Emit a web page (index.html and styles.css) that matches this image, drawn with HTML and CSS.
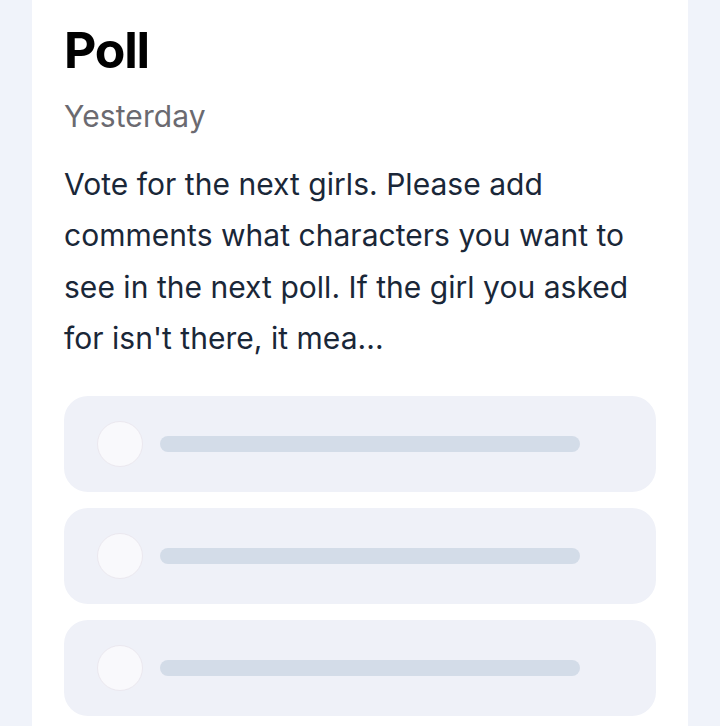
FILE: index.html
```html
<!DOCTYPE html>
<html lang="en">
<head>
    <meta charset="UTF-8">
    <meta name="viewport" content="width=device-width, initial-scale=1.0">
    <title>Poll</title>
    <link rel="stylesheet" href="styles.css">
</head>
<body>
    <div class="card">
        <h1 class="poll-title">Poll</h1>
        <div class="poll-date">Yesterday</div>
        <p class="poll-text">Vote for the next girls. Please add comments what characters you want to see in the next poll. If the girl you asked for isn't there, it mea...</p>

        <div class="options">
            <div class="option">
                <span class="radio"></span>
                <span class="bar"></span>
            </div>
            <div class="option">
                <span class="radio"></span>
                <span class="bar"></span>
            </div>
            <div class="option">
                <span class="radio"></span>
                <span class="bar"></span>
            </div>
        </div>
    </div>
</body>
</html>
```

FILE: styles.css
```css
body {
    margin: 0;
    background-color: #f0f3fa;
    font-family: Inter, 'Noto Sans', sans-serif;
    color: #1a2738;
}

.card {
    background-color: #ffffff;
    margin: 0 32px;
    padding: 20px 32px 40px 32px;
    min-height: 726px;
    box-sizing: border-box;
}

.poll-title {
    margin: 0;
    font-size: 50px;
    font-weight: 700;
    line-height: 60px;
    letter-spacing: -1.2px;
    color: #000000;
}

.poll-date {
    margin-top: 16px;
    font-size: 30px;
    line-height: 40px;
    letter-spacing: 0.1px;
    color: #6b6a70;
}

.poll-text {
    margin: 23px 0 0 0;
    font-size: 30px;
    line-height: 51.3px;
    letter-spacing: 0.03px;
    color: #1a2738;
}

.options {
    display: flex;
    flex-direction: column;
    gap: 16px;
    margin-top: 32px;
}

.option {
    display: flex;
    align-items: center;
    gap: 17px;
    height: 96px;
    padding: 0 33px;
    background-color: #eff1f8;
    border-radius: 24px;
}

.radio {
    width: 44px;
    height: 44px;
    border: 1px solid #ebe8ef;
    border-radius: 50%;
    background-color: #f9f9fc;
    flex-shrink: 0;
}

.bar {
    width: 420px;
    height: 16px;
    border-radius: 8px;
    background-color: #d3dce8;
}
```
